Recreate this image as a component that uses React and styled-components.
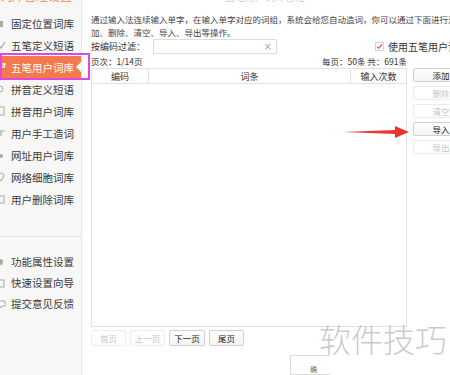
import React from "react";
import styled, { createGlobalStyle } from "styled-components";

// style
const GlobalStyle = createGlobalStyle`
  body {
    margin: 0;
    background: #fff;
  }
`;

const Window = styled.div`
  position: relative;
  width: 450px;
  height: 375px;
  overflow: hidden;
  display: flex;
  background: #fff;
  font-family: "Noto Sans CJK SC", "Noto Sans", sans-serif;
  color: #333;
`;

const Sidebar = styled.nav`
  width: 82px;
  flex-shrink: 0;
  background: #f7f7f7;
  border-right: 1px solid #e8e8e8;
  box-sizing: border-box;
  display: flex;
  flex-direction: column;
`;

const SideHeader = styled.div`
  height: 12px;
  overflow: hidden;
  font-size: 12px;
  line-height: 12px;
  color: #f08a5d;
  white-space: nowrap;
  span {
    display: block;
    margin-top: -10px;
  }
`;

const SideItem = styled.div`
  position: relative;
  height: ${(p) => p.$h || 22}px;
  display: flex;
  align-items: center;
  gap: 5px;
  font-size: 10.5px;
  white-space: nowrap;
  color: ${(p) => (p.$active ? "#fff" : "#3a3a3a")};
  background: ${(p) => (p.$active ? "#f27a4c" : "transparent")};
  svg {
    flex-shrink: 0;
  }
  ${(p) =>
    p.$active &&
    `
    &::after {
      content: "";
      position: absolute;
      right: 0;
      top: 6px;
      border-top: 5px solid transparent;
      border-bottom: 5px solid transparent;
      border-right: 5px solid #fff;
    }
  `}
`;

const SideDivider = styled.div`
  height: 1px;
  background: #e4e4e4;
  margin: 26px 0 14px;
`;

const Main = styled.main`
  flex: 1;
  padding-left: 9px;
  display: flex;
  flex-direction: column;
  white-space: nowrap;
`;

const Title = styled.div`
  height: 14px;
  overflow: hidden;
  font-size: 10px;
  line-height: 10px;
  color: #cfcfcf;
  padding-left: 134px;
  span {
    display: block;
    margin-top: -8px;
  }
`;

const Desc = styled.p`
  margin: 0;
  font-size: 8.5px;
  line-height: 13px;
  color: #444;
`;

const FilterRow = styled.div`
  height: 17px;
  display: flex;
  align-items: center;
  font-size: 9px;
`;

const Label = styled.span`
  width: 62px;
`;

const SearchBox = styled.div`
  width: 124px;
  height: 15px;
  box-sizing: border-box;
  border: 1px solid #dcdcdc;
  display: flex;
  align-items: center;
  justify-content: flex-end;
  padding-right: 4px;
  color: #aaa;
  font-size: 10px;
  font-family: "DejaVu Sans", sans-serif;
`;

const CheckWrap = styled.label`
  margin-left: 98px;
  display: flex;
  align-items: center;
  gap: 4px;
  font-size: 10px;
  color: #333;
`;

const CheckBox = styled.span`
  width: 9px;
  height: 9px;
  box-sizing: border-box;
  border: 1px solid #d6d6d6;
  background: #fff;
  display: flex;
  align-items: center;
  justify-content: center;
`;

const PageRow = styled.div`
  width: 316px;
  height: 16px;
  display: flex;
  align-items: center;
  justify-content: space-between;
  font-size: 8.5px;
  color: #333;
`;

const Body = styled.div`
  display: flex;
  gap: 6px;
`;

const Table = styled.div`
  width: 316px;
  height: 259px;
  box-sizing: border-box;
  border: 1px solid #e2e2e2;
  display: flex;
  flex-direction: column;
`;

const HeaderRow = styled.div`
  display: grid;
  grid-template-columns: 56px 202px 1fr;
  height: 14px;
  border-bottom: 1px solid #e2e2e2;
  font-size: 9px;
`;

const HeaderCell = styled.div`
  display: flex;
  align-items: center;
  justify-content: center;
  border-left: ${(p) => (p.$first ? "none" : "1px solid #e2e2e2")};
`;

const ActionCol = styled.div`
  display: flex;
  flex-direction: column;
  gap: 4px;
`;

const SideButton = styled.button`
  width: 56px;
  height: 14px;
  padding: 0;
  box-sizing: border-box;
  font-family: inherit;
  font-size: 8.5px;
  line-height: 12px;
  border-radius: 2px;
  border: 1px solid ${(p) => (p.disabled ? "#ececec" : "#cfcfcf")};
  background: ${(p) => (p.disabled ? "#fff" : "linear-gradient(#fff, #f4f4f4)")};
  color: ${(p) => (p.disabled ? "#c6c6c6" : "#222")};
`;

const Pager = styled.div`
  display: flex;
  gap: 4px;
  margin-top: 3px;
`;

const PageButton = styled.button`
  width: ${(p) => p.$w || 35}px;
  height: 16px;
  padding: 0;
  box-sizing: border-box;
  font-family: inherit;
  font-size: 8.5px;
  border-radius: 2px;
  border: 1px solid ${(p) => (p.disabled ? "#ececec" : "#cfcfcf")};
  background: ${(p) => (p.disabled ? "#fff" : "linear-gradient(#fff, #f3f3f3)")};
  color: ${(p) => (p.disabled ? "#c6c6c6" : "#222")};
`;

const Footer = styled.div`
  margin-top: 9px;
  padding-left: 199px;
`;

const OkButton = styled.div`
  width: 40px;
  height: 20px;
  box-sizing: border-box;
  border: 1px solid #dcdcdc;
  border-right: none;
  font-size: 7px;
  color: #666;
  padding: 8px 0 0 19px;
`;

// overlays
const Highlight = styled.div`
  position: absolute;
  left: 0;
  top: 53px;
  width: 90px;
  height: 27px;
  box-sizing: border-box;
  border: 2px solid #e046e4;
  pointer-events: none;
`;

const Arrow = styled.svg`
  position: absolute;
  left: 343px;
  top: 125px;
`;

const Watermark = styled.div`
  position: absolute;
  left: 319px;
  top: 320px;
  font-size: 32px;
  line-height: 36px;
  font-weight: 300;
  color: rgba(150, 150, 150, 0.5);
`;

// icons
const Icon = ({ kind, light }) => {
  const c = light ? "#fff" : "#a8a8a8";
  const shapes = {
    lock: <rect x="-3" y="3" width="6" height="6" fill={c} />,
    check: <path d="M-2 5 L1 8 L5 2" stroke={c} strokeWidth="1.2" fill="none" />,
    brush: <path d="M-3 2 L5 2 L4 5 L1 5 L1 9" stroke={c} strokeWidth="1.6" fill="none" />,
    person: <circle cx="0" cy="5" r="3" stroke={c} strokeWidth="1" fill="none" />,
    doc: <rect x="-2" y="1" width="6" height="8" stroke={c} strokeWidth="1" fill="none" />,
    pen: <path d="M-3 3 L5 3 M1 3 L1 8" stroke={c} strokeWidth="1.2" fill="none" />,
    link: <circle cx="1" cy="6" r="2" fill={c} />,
    pin: <path d="M-2 4 A3 3 0 1 1 4 4 L1 9 Z" stroke={c} strokeWidth="1" fill="none" />,
    trash: <rect x="-2" y="2" width="6" height="7" stroke={c} strokeWidth="1" fill="none" />,
    gear: <circle cx="0" cy="5" r="3" fill={c} />,
    guide: <rect x="-2" y="2" width="6" height="7" stroke={c} strokeWidth="1" fill="none" />,
    chat: <path d="M-3 2 L5 2 L5 7 L2 7 L0 9 L0 7 L-3 7 Z" stroke={c} strokeWidth="1" fill="none" />,
  };
  return (
    <svg width="6" height="10" viewBox="0 0 6 10">
      {shapes[kind]}
    </svg>
  );
};

const libraryItems = [
  { text: "固定位置词库", icon: "lock" },
  { text: "五笔定义短语", icon: "check" },
  { text: "五笔用户词库", icon: "brush", active: true },
  { text: "拼音定义短语", icon: "person" },
  { text: "拼音用户词库", icon: "doc" },
  { text: "用户手工造词", icon: "pen" },
  { text: "网址用户词库", icon: "link" },
  { text: "网络细胞词库", icon: "pin" },
  { text: "用户删除词库", icon: "trash" },
];

const toolItems = [
  { text: "功能属性设置", icon: "gear" },
  { text: "快速设置向导", icon: "guide" },
  { text: "提交意见反馈", icon: "chat" },
];

const actions = [
  { text: "添加" },
  { text: "删除", disabled: true },
  { text: "清空", disabled: true },
  { text: "导入" },
  { text: "导出", disabled: true },
];

const App = () => {
  return (
    <Window>
      <GlobalStyle />
      <Sidebar>
        <SideHeader>
          <span>词库管理设置</span>
        </SideHeader>
        {libraryItems.map((item) => (
          <SideItem key={item.text} $active={item.active}>
            <Icon kind={item.icon} light={item.active} />
            {item.text}
          </SideItem>
        ))}
        <SideDivider />
        {toolItems.map((item) => (
          <SideItem key={item.text} $h={21}>
            <Icon kind={item.icon} />
            {item.text}
          </SideItem>
        ))}
      </Sidebar>

      <Main>
        <Title>
          <span>五笔用户词库管理</span>
        </Title>
        <Desc>
          通过输入法连续输入单字，在输入单字对应的词组，系统会给您自动造词，你可以通过下面进行添
          <br />
          加、删除、清空、导入、导出等操作。
        </Desc>
        <FilterRow>
          <Label>按编码过滤：</Label>
          <SearchBox>×</SearchBox>
          <CheckWrap>
            <CheckBox>
              <svg width="8" height="7" viewBox="0 0 8 7">
                <path d="M1 3.5 L3 5.5 L7 1" stroke="#e0392b" strokeWidth="1.2" fill="none" />
              </svg>
            </CheckBox>
            使用五笔用户词库
          </CheckWrap>
        </FilterRow>
        <PageRow>
          <span>页次：1/14页</span>
          <span>每页：50条 共：691条</span>
        </PageRow>
        <Body>
          <Table>
            <HeaderRow>
              <HeaderCell $first>编码</HeaderCell>
              <HeaderCell>词条</HeaderCell>
              <HeaderCell>输入次数</HeaderCell>
            </HeaderRow>
          </Table>
          <ActionCol>
            {actions.map((a) => (
              <SideButton key={a.text} disabled={a.disabled}>
                {a.text}
              </SideButton>
            ))}
          </ActionCol>
        </Body>
        <Pager>
          <PageButton disabled>首页</PageButton>
          <PageButton disabled>上一页</PageButton>
          <PageButton $w={36}>下一页</PageButton>
          <PageButton>尾页</PageButton>
        </Pager>
        <Footer>
          <OkButton>确</OkButton>
        </Footer>
      </Main>

      <Highlight />
      <Arrow width="66" height="14" viewBox="0 0 66 14">
        <polygon points="0,7 52,5 52,1 66,7 52,13 52,9" fill="#e8382c" />
      </Arrow>
      <Watermark>软件技巧</Watermark>
    </Window>
  );
};

export default App;
